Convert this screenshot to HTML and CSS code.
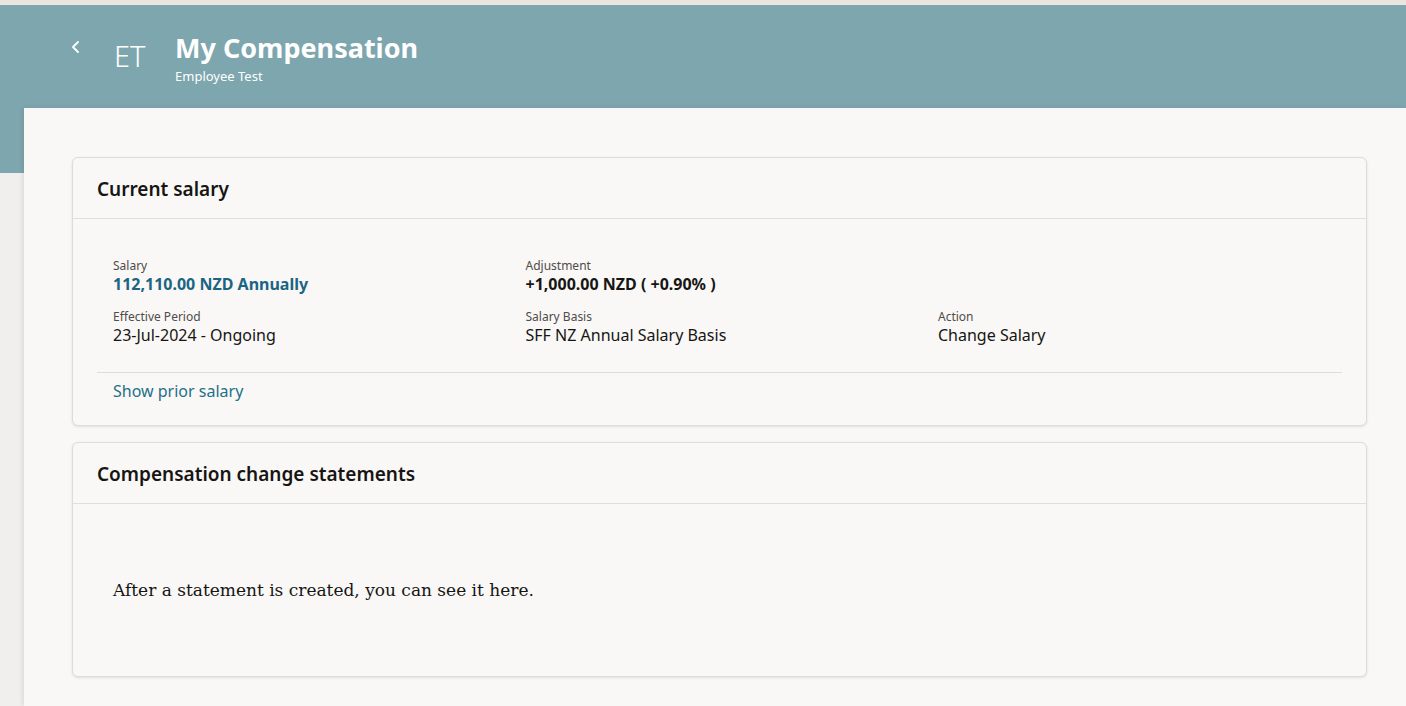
FILE: index.html
```html
<!DOCTYPE html>
<html lang="en">
<head>
<meta charset="UTF-8" />
<meta name="viewport" content="width=device-width, initial-scale=1.0">
<title>My Compensation</title>
<link rel="stylesheet" href="styles.css">
</head>
<body>

  <div class="top-strip"></div>

  <header class="page-header">
    <button class="back-btn" aria-label="Back">
      <svg width="12" height="14" viewBox="0 0 12 14"><path d="M8 2 L3 7 L8 12" fill="none" stroke="#ffffff" stroke-width="1.8" stroke-linecap="round" stroke-linejoin="round"/></svg>
    </button>
    <span class="initials">ET</span>
    <div class="title-block">
      <h1>My Compensation</h1>
      <span class="subtitle">Employee Test</span>
    </div>
  </header>

  <main class="panel">

    <section class="card">
      <div class="card-header">Current salary</div>
      <div class="card-body">
        <div class="fields">
          <div class="field">
            <span class="label">Salary</span>
            <span class="value salary">112,110.00 NZD Annually</span>
          </div>
          <div class="field">
            <span class="label">Adjustment</span>
            <span class="value strong">+1,000.00 NZD ( +0.90% )</span>
          </div>
          <div class="field"></div>

          <div class="field">
            <span class="label">Effective Period</span>
            <span class="value">23-Jul-2024 - Ongoing</span>
          </div>
          <div class="field">
            <span class="label">Salary Basis</span>
            <span class="value">SFF NZ Annual Salary Basis</span>
          </div>
          <div class="field">
            <span class="label">Action</span>
            <span class="value">Change Salary</span>
          </div>
        </div>
        <div class="card-footer">
          <a href="#" class="prior-link">Show prior salary</a>
        </div>
      </div>
    </section>

    <section class="card">
      <div class="card-header">Compensation change statements</div>
      <div class="card-body empty">
        <p class="empty-text">After a statement is created, you can see it here.</p>
      </div>
    </section>

  </main>

</body>
</html>
```

FILE: styles.css
```css
body {
  margin: 0;
  background-color: #f1efed;
  font-family: "Noto Sans", "Open Sans", Arial, sans-serif;
  color: #161513;
  height: 706px;
  overflow: hidden;
}

.top-strip {
  height: 5px;
  background-color: #e9e5df;
}

/* teal header band, the panel overlaps its bottom part */
.page-header {
  height: 168px;
  background-color: #7ea6ae;
  color: #ffffff;
  display: flex;
  align-items: flex-start;
  padding-left: 68px;
  box-sizing: border-box;
  padding-top: 29px;
}

.back-btn {
  background: none;
  border: none;
  padding: 0;
  margin-top: 6px;
  width: 16px;
  height: 16px;
  cursor: pointer;
}

.initials {
  font-size: 29px;
  font-weight: 300;
  margin-left: 30px;
  margin-top: 2px;
  width: 61px;
}

.title-block {
  display: flex;
  flex-direction: column;
}

.title-block h1 {
  margin: 0;
  font-size: 27px;
  font-weight: 700;
  line-height: 28px;
}

.subtitle {
  font-size: 13px;
  margin-top: 5px;
}

.panel {
  margin-top: -65px;
  margin-left: 24px;
  background-color: #f9f8f6;
  padding: 49px 39px 0 48px;
  height: 598px;
  box-sizing: border-box;
  box-shadow: -2px 0 4px rgba(0, 0, 0, 0.08);
  display: flex;
  flex-direction: column;
  gap: 16px;
}

.card {
  background-color: #f9f8f6;
  border: 1px solid #dedcd9;
  border-radius: 6px;
  box-shadow: 0 1px 3px rgba(0, 0, 0, 0.1);
}

.card-header {
  padding: 1px 24px 0 24px;
  height: 61px;
  box-sizing: border-box;
  display: flex;
  align-items: center;
  border-bottom: 1px solid #e0dedb;
  font-size: 19px;
  font-weight: 600;
}

.card-body {
  padding: 39px 24px 0 24px;
}

.fields {
  display: grid;
  grid-template-columns: repeat(3, 412.5px);
  row-gap: 14px;
  padding: 0 16px 26px 16px;
  border-bottom: 1px solid #dedcd9;
}

.field {
  display: flex;
  flex-direction: column;
}

.label {
  font-size: 12px;
  line-height: 16px;
  color: #4f4c49;
}

.value {
  font-size: 16px;
  line-height: 22px;
  margin-top: -1px;
}

.value.salary {
  color: #1b6583;
  font-weight: 700;
}

.value.strong {
  font-weight: 700;
}

.card-footer {
  padding: 7px 16px 23px 16px;
}

.prior-link {
  color: #227088;
  text-decoration: none;
  font-size: 16px;
  line-height: 22px;
}

.card-body.empty {
  height: 172px;
  box-sizing: border-box;
  padding: 0 40px;
  display: flex;
  align-items: center;
}

.empty-text {
  margin: 0;
  font-family: "DejaVu Serif", Georgia, serif;
  font-size: 17px;
}
```
